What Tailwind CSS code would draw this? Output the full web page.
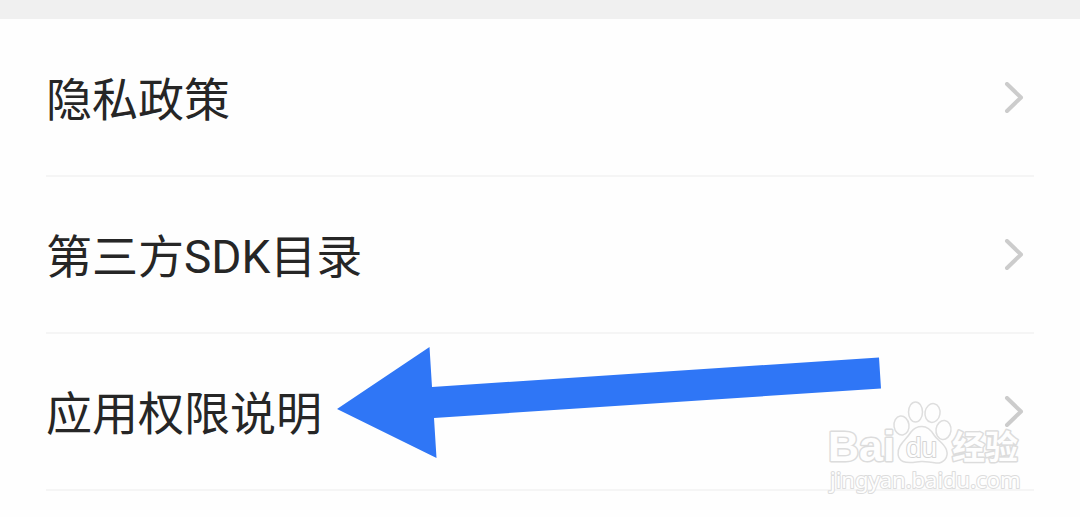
<!DOCTYPE html>
<html lang="zh-CN">
<head>
<meta charset="utf-8">
<meta name="viewport" content="width=device-width, initial-scale=1">
<title>隐私</title>
<script src="https://cdn.jsdelivr.net/npm/@tailwindcss/browser@4"></script>
</head>
<body class="relative min-h-screen overflow-x-hidden bg-[#fefefe] font-['Roboto','Noto_Sans_CJK_SC',sans-serif] text-[#262626]">
<div class="h-[19px] bg-[#f0f0f0]"></div>
<nav class="px-[46px] pt-px text-[46px] leading-[60px]">
  <a href="#privacy" class="flex h-[157px] items-center justify-between border-b-2 border-[#f5f5f5] pr-[10px]">
    <span class="pt-1">隐私政策</span>
    <svg class="h-8 w-5" viewBox="0 1 20 32" fill="none" stroke="#cccccc" stroke-width="4" stroke-linecap="round" stroke-linejoin="round" aria-hidden="true"><path d="M3 3L17 16.500L3 30"/></svg>
  </a>
  <a href="#sdk" class="flex h-[157px] items-center justify-between border-b-2 border-[#f5f5f5] pr-[10px]">
    <span class="pt-1">第三方SDK目录</span>
    <svg class="h-8 w-5" viewBox="0 1 20 32" fill="none" stroke="#cccccc" stroke-width="4" stroke-linecap="round" stroke-linejoin="round" aria-hidden="true"><path d="M3 3L17 16.500L3 30"/></svg>
  </a>
  <a href="#permissions" class="flex h-[157px] items-center justify-between border-b-2 border-[#f5f5f5] pr-[10px]">
    <span class="pt-1">应用权限说明</span>
    <svg class="h-8 w-5" viewBox="0 1 20 32" fill="none" stroke="#cccccc" stroke-width="4" stroke-linecap="round" stroke-linejoin="round" aria-hidden="true"><path d="M3 3L17 16.500L3 30"/></svg>
  </a>
</nav>
<!-- Pointer to the permissions row -->
<svg class="pointer-events-none absolute top-[340px] left-[330px] h-[125px] w-[560px]" viewBox="330 340 560 125" fill="#2f76f6" aria-hidden="true">
  <path d="M337 409L429.500 347L432 387L879 357.500L881 388.500L434 418L436.500 458Z"/>
</svg>
<!-- Watermark -->
<svg class="pointer-events-none absolute top-[395px] right-[50px] h-[105px] w-[210px]" viewBox="820 395 210 105" role="img" aria-label="Baidu 经验">
  <g fill="#fefefe" stroke="#dedede" stroke-width="1.500">
    <ellipse cx="901.500" cy="425.500" rx="7.500" ry="9.500" transform="rotate(-8 901.500 425.500)"/>
    <ellipse cx="915.500" cy="412" rx="7" ry="10"/>
    <ellipse cx="932.500" cy="413" rx="7.500" ry="9.500" transform="rotate(10 932.500 413)"/>
    <ellipse cx="943.500" cy="430" rx="7.500" ry="9.500" transform="rotate(8 943.500 430)"/>
    <path d="M922 426.500C928 426.500 931 430 934 435C937 440 944 443 946.500 450C949 458 943 463.500 936 463C929 462.500 926 461 921 461.500C915 462 909 464 903 461.500C897 459 897 451 900 446C903 441 907 438 911 432C914 428 917 426.500 922 426.500Z"/>
  </g>
  <g fill="#fefefe" stroke="#dcdcdc" stroke-linejoin="round" paint-order="stroke">
    <text x="828" y="461" font-family="Liberation Sans, sans-serif" font-weight="700" font-size="43" stroke-width="3">Bai</text>
    <text x="906" y="457" font-family="Liberation Sans, sans-serif" font-weight="400" font-size="28" stroke="#d4d4d4" stroke-width="2">du</text>
    <text x="952" y="459" font-family="Noto Sans CJK SC, sans-serif" font-weight="700" font-size="33" stroke-width="3">经验</text>
    <text x="830" y="488" font-family="Noto Sans, sans-serif" font-weight="400" font-size="22" stroke-width="2">jingyan.baidu.com</text>
  </g>
</svg>
</body>
</html>
